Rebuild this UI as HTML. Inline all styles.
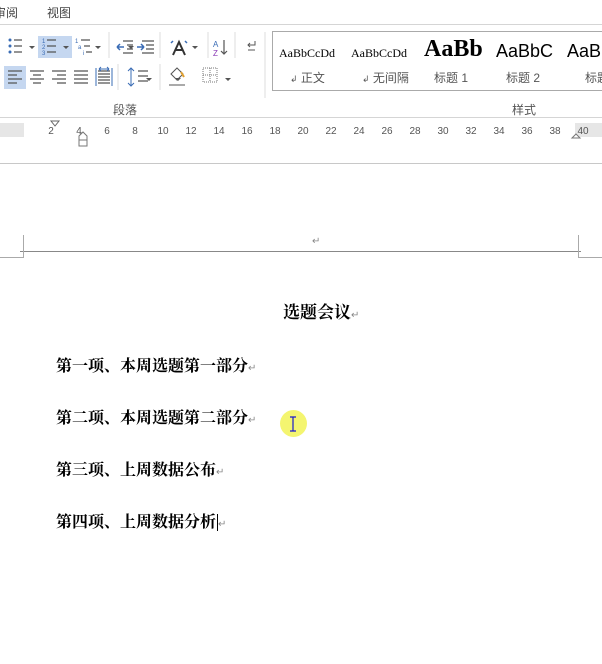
<!DOCTYPE html>
<html><head><meta charset="utf-8"><style>
*{margin:0;padding:0;box-sizing:border-box}
body{width:602px;height:664px;overflow:hidden;background:#fff;position:relative;font-family:"Liberation Sans","Noto Sans CJK SC",sans-serif}
.a{position:absolute}
.t{font-size:12px;color:#444}
.rn{position:absolute;top:126px;font-size:10px;color:#555;width:20px;text-align:center;margin-left:-10px}
.doc{position:absolute;left:56px;font-size:16px;font-weight:bold;color:#000;font-family:"Liberation Serif","Noto Serif CJK SC",serif;line-height:20px}
.ret{font-size:10px;color:#888;font-weight:normal}
.sty{position:absolute;top:40px;font-family:"Liberation Serif",serif;color:#000;white-space:nowrap;overflow:hidden}
.sl{position:absolute;top:69px;font-size:12px;color:#555;white-space:nowrap}
</style></head><body>
<div class="a t" style="left:-6px;top:4px">审阅</div>
<div class="a t" style="left:47px;top:4px">视图</div>
<div class="a" style="left:0;top:24px;width:602px;height:1px;background:#d5d5d5"></div>

<div class="a" style="left:38px;top:36px;width:34px;height:22px;background:#c5d7f0"></div>
<div class="a" style="left:4px;top:66px;width:22px;height:23px;background:#c5d7f0"></div>
<svg class="a" style="left:0;top:28px" width="270" height="70">
<g fill="#3a6cb5"><circle cx="10" cy="12" r="1.5"/><circle cx="10" cy="18" r="1.5"/><circle cx="10" cy="24" r="1.5"/></g>
<g stroke="#555" stroke-width="1.2"><path d="M14 12h8M14 18h8M14 24h8M47 12h9M47 18h9M47 24h9M81 12h9M84 18h6M86 24h6"/></g>
<g fill="#555"><path d="M29 18l3 3 3-3zM63 18l3 3 3-3zM95 18l3 3 3-3zM128 18l3 3 3-3zM192 18l3 3 3-3zM146 50l3 3 3-3zM175 50l3 3 3-3zM225 50l3 3 3-3z"/></g>
<g fill="#3a6cb5" font-size="6" font-family="Liberation Sans"><text x="42" y="15">1</text><text x="42" y="21">2</text><text x="42" y="27">3</text><text x="75" y="15">1</text><text x="78" y="21">a</text><text x="83" y="27">i</text></g>
<path d="M109 4v26M160 4v26M208 4v26M235 4v26M118 36v26M160 36v26M265 4v84" stroke="#ddd"/>
<g stroke="#555" stroke-width="1.2"><path d="M123 13h10M127 17h6M127 21h6M123 25h10M142 13h12M146 17h8M146 21h8M142 25h12"/></g>
<path d="M117 19h7M117 19l3-3M117 19l3 3M137 19h7M144 19l-3-3M144 19l-3 3" stroke="#3a6cb5" stroke-width="1.5" fill="none"/>
<path d="M173 27l6-13 6 13M175 22h8" stroke="#333" stroke-width="2" fill="none"/>
<path d="M171 15l2-2M187 15l-2-2" stroke="#3a6cb5" stroke-width="1.5"/>
<text x="213" y="19" font-size="8" fill="#3a6cb5" font-family="Liberation Sans">A</text><text x="213" y="28" font-size="8" fill="#8a3ab5" font-family="Liberation Sans">Z</text>
<path d="M224 12v14M221 23l3 3 3-3" stroke="#555" fill="none" stroke-width="1.2"/>
<path d="M255 13v4h-7M250 15l-2 2 2 2M248 22h7" stroke="#555" fill="none"/>
<g stroke="#555" stroke-width="1.2"><path d="M8 43h14M8 47h9M8 51h14M8 55h9M30 43h14M33 47h8M30 51h14M33 55h8M52 43h14M57 47h9M52 51h14M57 55h9M74 43h14M74 47h14M74 51h14M74 55h14M98 43h12M98 46h12M98 49h12M98 52h12M98 55h12"/><path d="M138 43h10M138 48h10M138 53h10"/></g>
<path d="M96 40v18M112 40v18M99 41h10M99 41l2-2M99 41l2 2M109 41l-2-2M109 41l-2 2" stroke="#3a6cb5" fill="none"/>
<path d="M131 40v18M128 43l3-3 3 3M128 55l3 3 3-3" stroke="#3a6cb5" fill="none"/>
<path d="M171 46l6-6 6 6-6 6zM169 57h16" stroke="#555" fill="none"/><path d="M181 44l3 5" stroke="#e0a030" stroke-width="2"/>
<rect x="203" y="40" width="14" height="14" fill="none" stroke="#777" stroke-dasharray="1 1"/>
<path d="M210 40v14M203 47h14" stroke="#777" stroke-dasharray="1 1"/>
<path d="M256 75h6v6M258 79h4" stroke="#888" fill="none"/>
</svg>
<div class="a t" style="left:113px;top:101px;color:#555">段落</div>
<div class="a t" style="left:512px;top:101px;color:#555">样式</div>

<div class="a" style="left:272px;top:31px;width:340px;height:60px;border:1px solid #aaa"></div>
<div class="sty" style="left:279px;font-size:12px;top:46px;width:60px">AaBbCcDd</div>
<div class="sty" style="left:351px;font-size:12px;top:46px;width:58px">AaBbCcDd</div>
<div class="sty" style="left:424px;font-size:24px;font-weight:bold;top:36px;width:58px">AaBb</div>
<div class="sty" style="left:496px;font-size:18px;top:41px;width:58px;font-family:'Liberation Sans',sans-serif">AaBbC</div>
<div class="sty" style="left:567px;font-size:18px;top:41px;width:40px;font-family:'Liberation Sans',sans-serif">AaBb</div>
<div class="sl" style="left:290px"><span style="font-size:9px">↲</span> 正文</div>
<div class="sl" style="left:362px"><span style="font-size:9px">↲</span> 无间隔</div>
<div class="sl" style="left:434px">标题 1</div>
<div class="sl" style="left:506px">标题 2</div>
<div class="sl" style="left:585px">标题</div>

<div class="a" style="left:0;top:117px;width:602px;height:1px;background:#d5d5d5"></div>
<div class="a" style="left:0;top:123px;width:602px;height:14px;background:#e6e6e6"></div>
<div class="a" style="left:24px;top:123px;width:551px;height:14px;background:#fff"></div>
<div class="rn" style="left:51px">2</div><div class="rn" style="left:79px">4</div><div class="rn" style="left:107px">6</div><div class="rn" style="left:135px">8</div><div class="rn" style="left:163px">10</div><div class="rn" style="left:191px">12</div><div class="rn" style="left:219px">14</div><div class="rn" style="left:247px">16</div><div class="rn" style="left:275px">18</div><div class="rn" style="left:303px">20</div><div class="rn" style="left:331px">22</div><div class="rn" style="left:359px">24</div><div class="rn" style="left:387px">26</div><div class="rn" style="left:415px">28</div><div class="rn" style="left:443px">30</div><div class="rn" style="left:471px">32</div><div class="rn" style="left:499px">34</div><div class="rn" style="left:527px">36</div><div class="rn" style="left:555px">38</div><div class="rn" style="left:583px">40</div>
<svg class="a" style="left:0;top:118px" width="602" height="30">
<path d="M51 3h8l-4 5z" fill="#fff" stroke="#666"/>
<path d="M79 18l4-4 4 4v4h-8z" fill="#fff" stroke="#777"/><rect x="79" y="22" width="8" height="6" fill="#fff" stroke="#777"/>
<path d="M572 20l4-4 4 4z" fill="#fff" stroke="#777"/>
</svg>
<div class="a" style="left:0;top:163px;width:602px;height:1px;background:#c8c8c8"></div>

<div class="a" style="left:20px;top:251px;width:561px;height:1px;background:#888"></div>
<div class="a" style="left:23px;top:235px;width:1px;height:23px;background:#aaa"></div>
<div class="a" style="left:578px;top:235px;width:1px;height:23px;background:#aaa"></div>
<div class="a" style="left:0;top:257px;width:23px;height:1px;background:#aaa"></div>
<div class="a" style="left:579px;top:257px;width:23px;height:1px;background:#aaa"></div>
<div class="a ret" style="left:312px;top:236px">↵</div>

<div class="doc" style="left:283px;top:303px;font-size:17px">选题会议<span class="ret">↵</span></div>
<div class="doc" style="top:357px">第一项、本周选题第一部分<span class="ret">↵</span></div>
<div class="doc" style="top:409px">第二项、本周选题第二部分<span class="ret">↵</span></div>
<div class="doc" style="top:461px">第三项、上周数据公布<span class="ret">↵</span></div>
<div class="doc" style="top:513px">第四项、上周数据分析<span style="font-weight:normal;border-left:1px solid #000;margin-left:1px"></span><span class="ret">↵</span></div>

<div class="a" style="left:280px;top:410px;width:27px;height:27px;border-radius:50%;background:#f4f570"></div>
<svg class="a" style="left:288px;top:415px" width="10" height="18"><path d="M2 2h6M5 2v14M2 16h6" stroke="#1a1acc" stroke-width="1.2"/></svg>
</body></html>
